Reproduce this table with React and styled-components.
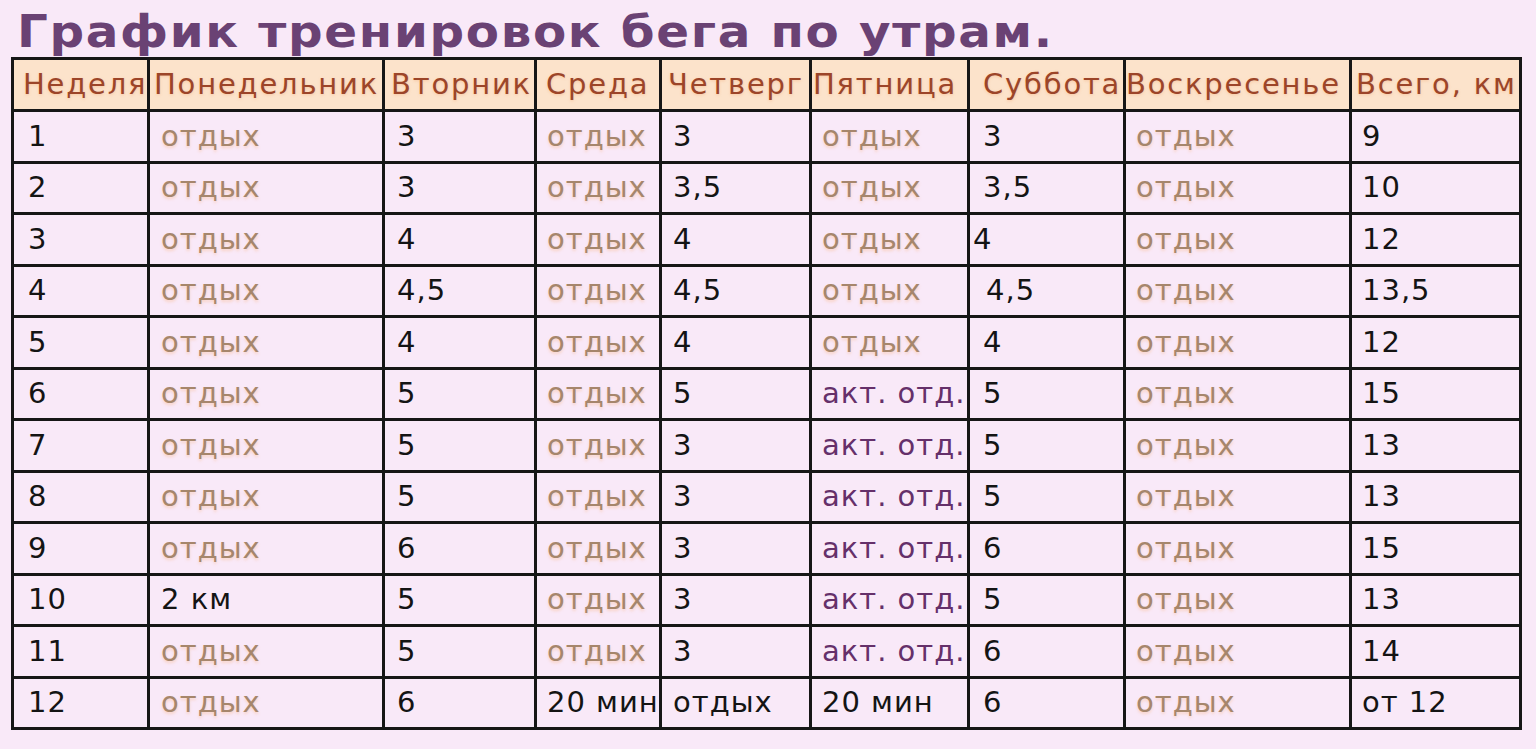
import styled, { createGlobalStyle } from "styled-components";

const GlobalStyle = createGlobalStyle`
	html, body {
		margin: 0;
		padding: 0;
		background: #f9e9f8;
	}
	body {
		font-family: "DejaVu Sans", Verdana, sans-serif;
	}
`;

const columns = [
	{ title: "Неделя", width: 136, head: 9, body: 14 },
	{ title: "Понедельник", width: 235, head: 4, body: 11 },
	{ title: "Вторник", width: 152, head: 6, body: 12 },
	{ title: "Среда", width: 125, head: 9, body: 10 },
	{ title: "Четверг", width: 150, head: 6, body: 11 },
	{ title: "Пятница", width: 158, head: 1, body: 10 },
	{ title: "Суббота", width: 156, head: 13, body: 13 },
	{ title: "Воскресенье", width: 226, head: 0, body: 10 },
	{ title: "Всего, км", width: 170, head: 4, body: 10 },
];

const R = "отдых";
const A = "акт. отд.";

const rows = [
	["1", R, "3", R, "3", R, "3", R, "9"],
	["2", R, "3", R, "3,5", R, "3,5", R, "10"],
	["3", R, "4", R, "4", R, { text: "4", shift: -10 }, R, "12"],
	["4", R, "4,5", R, "4,5", R, { text: "4,5", shift: 3 }, R, "13,5"],
	["5", R, "4", R, "4", R, "4", R, "12"],
	["6", R, "5", R, "5", A, "5", R, "15"],
	["7", R, "5", R, "3", A, "5", R, "13"],
	["8", R, "5", R, "3", A, "5", R, "13"],
	["9", R, "6", R, "3", A, "6", R, "15"],
	["10", "2 км", "5", R, "3", A, "5", R, "13"],
	["11", R, "5", R, "3", A, "6", R, "14"],
	["12", R, "6", "20 мин", { text: R, kind: "plain" }, "20 мин", "6", R, "от 12"],
];

function toCell(value) {
	const cell = typeof value === "string" ? { text: value } : value;
	let kind = cell.kind;
	if (!kind) {
		if (cell.text === R) kind = "rest";
		else if (cell.text === A) kind = "active";
		else kind = "plain";
	}
	return { text: cell.text, kind, shift: cell.shift || 0 };
}

export default function App() {
	return (
		<>
			<GlobalStyle />
			<Page>
				<Title>График тренировок бега по утрам.</Title>
				<Schedule>
					<colgroup>
						{columns.map((col) => (
							<col key={col.title} style={{ width: col.width }} />
						))}
					</colgroup>
					<thead>
						<tr>
							{columns.map((col) => (
								<HeadCell key={col.title} $indent={col.head}>
									{col.title}
								</HeadCell>
							))}
						</tr>
					</thead>
					<tbody>
						{rows.map((row, r) => (
							<tr key={r}>
								{row.map((value, c) => {
									const cell = toCell(value);
									return (
										<Cell
											key={c}
											$indent={columns[c].body + cell.shift}
											$kind={cell.kind}
										>
											{cell.text}
										</Cell>
									);
								})}
							</tr>
						))}
					</tbody>
				</Schedule>
			</Page>
		</>
	);
}

const colors = {
	plain: "#141414",
	rest: "#a6866c",
	active: "#65306a",
};

const Page = styled.main`
	padding: 9px 0 0 11px;
`;

// the original heading font is wider than DejaVu Bold, so stretch it a bit
const Title = styled.h1`
	width: fit-content;
	margin: 0 0 2px 6px;
	font-family: "DejaVu Sans", Verdana, sans-serif;
	font-weight: bold;
	font-size: 44px;
	line-height: 46px;
	height: 46px;
	letter-spacing: 1.5px;
	transform: scaleX(1.1);
	transform-origin: left center;
	color: #6a4274;
	white-space: nowrap;
	position: relative;
	z-index: 1;
`;

const Schedule = styled.table`
	table-layout: fixed;
	border-collapse: separate;
	border-spacing: 0;
	width: 1511px;
	border-top: 3px solid #161616;
	border-left: 3px solid #161616;
	font-family: "DejaVu Sans", Verdana, sans-serif;
	font-size: 29px;
	letter-spacing: 1px;
`;

const baseCell = `
	box-sizing: border-box;
	border-right: 3px solid #161616;
	border-bottom: 3px solid #161616;
	text-align: left;
	vertical-align: middle;
	white-space: nowrap;
	overflow: visible;
	font-weight: normal;
	line-height: 1;
`;

const HeadCell = styled.th`
	${baseCell}
	height: 52px;
	padding: 0 0 0 ${({ $indent }) => $indent}px;
	background: #fce3cb;
	color: #9c4529;
	letter-spacing: 1.8px;
	text-shadow: 0 1px 3px rgba(240, 150, 90, 0.35);
`;

const Cell = styled.td`
	${baseCell}
	height: 51.5px;
	padding: 0 0 0 ${({ $indent }) => $indent}px;
	color: ${({ $kind }) => colors[$kind]};
	text-shadow: ${({ $kind }) =>
		$kind === "rest" ? "0 2px 3px rgba(250, 170, 100, 0.35)" : "none"};
`;
